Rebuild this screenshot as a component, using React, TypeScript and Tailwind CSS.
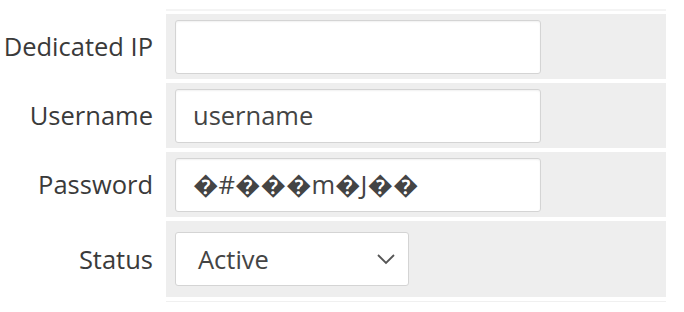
import React from "react";

const font = { fontFamily: '"Open Sans", "DejaVu Sans", sans-serif' };

function Row({ label, children, tall }: { label: string; children: React.ReactNode; tall?: boolean }) {
  return (
    <div className="flex items-stretch">
      <div className="w-[166px] shrink-0 flex items-center justify-end pr-[13px] text-[25.5px] text-[#3a3a3a]">
        {label}
      </div>
      <div className={"w-[500px] bg-[#eeeeee] pl-[9px] flex items-center " + (tall ? "h-[76px]" : "h-[65px]")}>
        {children}
      </div>
    </div>
  );
}

function Input({ value }: { value: string }) {
  return (
    <div className="w-[366px] h-[54px] bg-white border border-[#d4d4d4] rounded-[3px] shadow-[inset_0_1px_2px_rgba(0,0,0,0.06)] flex items-center pl-[17px] text-[25.5px] text-[#444]">
      {value}
    </div>
  );
}

export default function App() {
  return (
    <div className="w-[684px] h-[312px] bg-white overflow-hidden" style={font}>
      <div className="pt-[9px]">
        <div className="ml-[166px] w-[500px] h-[2px] bg-[#f4f4f4]" />
        <div className="mt-[3px] flex flex-col gap-[4px]">
          <Row label="Dedicated IP">
            <Input value="" />
          </Row>
          <Row label="Username">
            <Input value="username" />
          </Row>
          <Row label="Password">
            <Input value={"\uFFFD#\uFFFD\uFFFD\uFFFDm\uFFFDJ\uFFFD\uFFFD"} />
          </Row>
          <Row label="Status" tall>
            <div className="w-[234px] h-[54px] bg-white border border-[#d4d4d4] rounded-[3px] flex items-center justify-between pl-[22px] pr-[12px] text-[25.5px] text-[#444]">
              <span>Active</span>
              <svg width="20" height="12" viewBox="0 0 20 12" fill="none" stroke="#555" strokeWidth="1.8">
                <path d="M2 2 L10 10 L18 2" />
              </svg>
            </div>
          </Row>
        </div>
        <div className="ml-[166px] mt-[4px] w-[500px] h-[1px] bg-[#f0f0f0]" />
      </div>
    </div>
  );
}
